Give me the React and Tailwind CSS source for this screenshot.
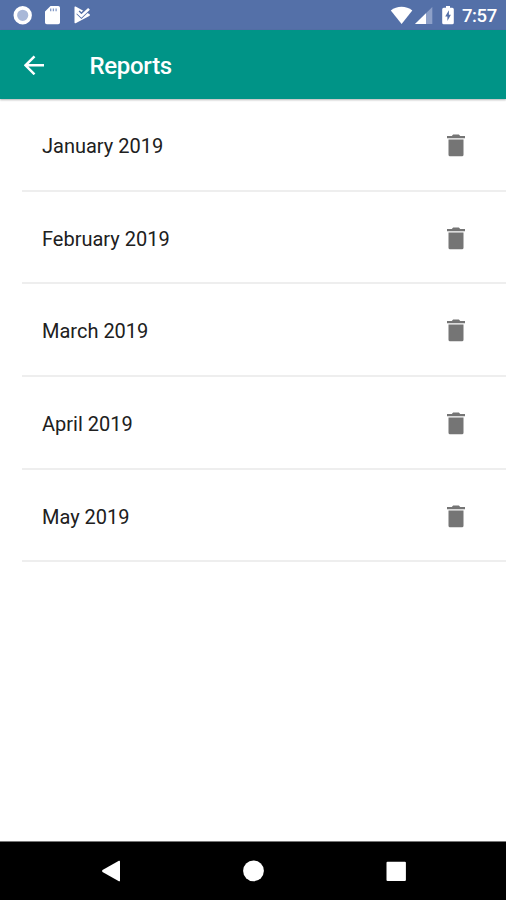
const reports = ['January 2019', 'February 2019', 'March 2019', 'April 2019', 'May 2019'];

function StatusBar() {
  return (
    <div className="flex h-[30px] shrink-0 items-center justify-between bg-[#5470a8] text-white">
      <svg className="h-[30px] w-[110px]" viewBox="0 0 110 30">
        <circle cx="22.7" cy="15.3" r="7.4" fill="#a9b8d8" stroke="#fff" strokeWidth="3.6" />
        <path d="M50.5 6h7.700a1.800 1.800 0 0 1 1.800 1.800v14.700a1.800 1.800 0 0 1-1.800 1.800H46.800a1.800 1.800 0 0 1-1.800-1.800V11.500z" fill="#fff" />
        <path d="M50.700 8.500v2.700M53.400 8.500v2.700M56.100 8.500v2.700" stroke="#8299c6" strokeWidth="1.300" />
        <path d="M74.500 7.200q0-1.200 1.100-.6l5.900 3.200 4.500 2.500 3.300 1.800q1.600.9 0 1.800l-13.700 7.300q-1.100.5-1.100-.6z" fill="#fff" />
        <path d="M78 12.300l3.400 3.300 8.400-8" fill="none" stroke="#5470a8" strokeWidth="4.800" />
        <path d="M77.500 12.300l3.900 3.700 7.600-7.100" fill="none" stroke="#fff" strokeWidth="2.600" />
      </svg>
      <div className="flex items-center pr-[9px]">
        <svg className="h-[30px] w-[72px]" viewBox="390 0 72 30">
          <path d="M390.800 10.500c6-5 15.500-5 21.500 0L401.600 24z" fill="#fff" />
          <path d="M432.300 7v17H415z" fill="#8da0c8" />
          <path d="M426 13.200V24h-11z" fill="#fff" />
          <path d="M446 6h4v1.800h2.300q1.500 0 1.500 1.500v13.500q0 1.500-1.500 1.500h-8.600q-1.500 0-1.500-1.500V9.300q0-1.500 1.500-1.500h2.300z" fill="#fff" />
          <path d="M448.900 10.300l-3.700 6.300h2.200v4.500l3.500-6.400h-2z" fill="#5470a8" />
        </svg>
        <span className="w-[35px] pt-px text-[18.5px] leading-[30px] font-medium tracking-[-0.4px] whitespace-nowrap">7:57</span>
      </div>
    </div>
  );
}

function TrashIcon() {
  return (
    <svg className="mt-px h-6 w-5" viewBox="0 0 20 24">
      <path d="M1 3h4.800l1.300-1.500h5.800L14.200 3H19v2.200H1zM2.500 6.500h15v15.300q0 1.500-1.500 1.500H4q-1.500 0-1.500-1.500z" fill="#757575" />
    </svg>
  );
}

export default function App() {
  return (
    <div className="flex h-[900px] w-[506px] flex-col overflow-hidden bg-white font-['Roboto',sans-serif]">
      <StatusBar />
      <header className="z-10 flex h-[69px] shrink-0 items-center bg-[#009487] pl-6 text-white shadow-[0_1px_2px_rgba(0,0,0,0.3)]">
        <svg className="h-5 w-5" viewBox="0 0 20 20" fill="none" stroke="#fff" strokeWidth="2.500">
          <path d="M20 10.300H2M10.500 1.300l-9 9 9 9" />
        </svg>
        <h1 className="ml-[45.500px] pt-[3px] text-[24px] leading-8 font-medium tracking-[-0.3px]">Reports</h1>
      </header>
      <main className="flex-1">
        <ul className="pl-[22px]">
          {reports.map((name) => (
            <li key={name} className="flex h-[92.700px] items-center justify-between border-b-2 border-[#eeeeee] pr-10 pl-5">
              <span className="pt-[3.400px] text-[20px] leading-6 text-[#202020]">{name}</span>
              <TrashIcon />
            </li>
          ))}
        </ul>
      </main>
      <nav className="h-[59px] shrink-0 border-t border-[#777] bg-black">
        <svg className="h-[58px] w-full" viewBox="0 842 506 58" fill="#fff">
          <path d="M102.500 870q-1 1 0 2l16.400 9.200q1.100.5 1.100-.7v-19q0-1.200-1.100-.7z" />
          <circle cx="253.500" cy="870.800" r="10.400" />
          <rect x="386.500" y="861.700" width="19.400" height="19.200" rx="1" />
        </svg>
      </nav>
    </div>
  );
}
